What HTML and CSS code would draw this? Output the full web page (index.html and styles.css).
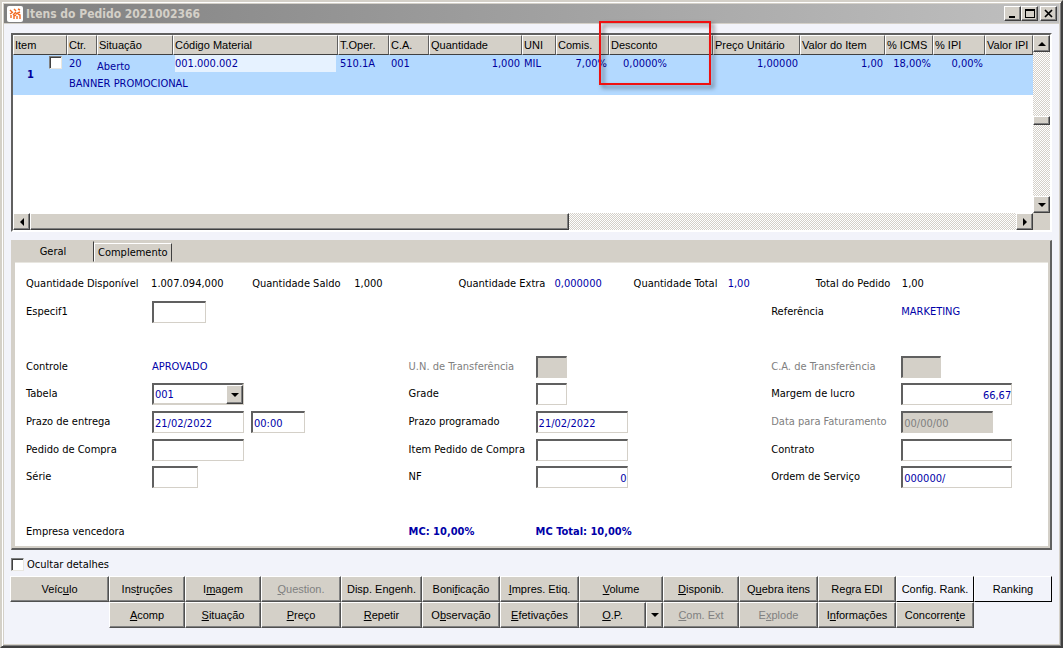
FILE: index.html
```html
<!DOCTYPE html>
<html lang="pt-BR">
<head>
  <meta charset="UTF-8">
  <meta name="viewport" content="width=device-width, initial-scale=1.0">
  <title>Itens do Pedido 2021002366</title>
  <link rel="stylesheet" href="styles.css">
</head>
<body>
  <div class="window">
    <header class="titlebar">
      <svg class="logo" viewBox="0 0 16 16">
        <rect width="16" height="16" rx="2" fill="#fff"/>
        <path d="M3 4l2 2M7 3l2 2M11 3l2 1M3 8l3-2M6 9l3-3M9 8l4-2M4 12V9M7 13v-3l2-1M10 13v-3M13 13V9l-2-1" stroke="#f26a21" stroke-width="1.4" fill="none"/>
      </svg>
      <h1>Itens do Pedido 2021002366</h1>
      <button class="win_btn" aria-label="Minimizar"><svg viewBox="0 0 12 11"><path d="M2 8h6v2H2z"/></svg></button>
      <button class="win_btn" aria-label="Maximizar"><svg viewBox="0 0 12 11"><path d="M1 1h10v9H1zM2 3v6h8V3z" fill-rule="evenodd"/></svg></button>
      <button class="win_btn close" aria-label="Fechar"><svg viewBox="0 0 12 11"><path d="M2 2l7 7M9 2l-7 7" stroke="#000" stroke-width="1.7"/></svg></button>
    </header>

    <main>
      <section class="list">
        <div class="list_view">
          <table>
            <colgroup>
              <col class="c_item"><col class="c_ctr"><col class="c_sit"><col class="c_cod"><col class="c_oper">
              <col class="c_ca"><col class="c_qtd"><col class="c_uni"><col class="c_com"><col class="c_desc">
              <col class="c_preco"><col class="c_valor"><col class="c_icms"><col class="c_ipi"><col>
            </colgroup>
            <thead>
              <tr>
                <th>Item</th><th>Ctr.</th><th>Situação</th><th>Código Material</th><th>T.Oper.</th>
                <th>C.A.</th><th>Quantidade</th><th>UNI</th><th>Comis.</th><th>Desconto</th>
                <th>Preço Unitário</th><th>Valor do Item</th><th>% ICMS</th><th>% IPI</th><th>Valor IPI</th>
              </tr>
            </thead>
            <tbody>
              <tr>
                <td rowspan="2" class="item">
                  <div class="item_box"><b>1</b><input type="checkbox" class="check" aria-label="Selecionar item 1"></div>
                </td>
                <td>20</td>
                <td class="low">Aberto</td>
                <td class="code"><span>001.000.002</span></td>
                <td>510.1A</td>
                <td>001</td>
                <td class="num">1,000</td>
                <td>MIL</td>
                <td class="num">7,00%</td>
                <td class="desc">0,0000%</td>
                <td class="num">1,00000</td>
                <td class="num">1,00</td>
                <td class="num">18,00%</td>
                <td class="num">0,00%</td>
                <td></td>
              </tr>
              <tr>
                <td colspan="14">BANNER PROMOCIONAL</td>
              </tr>
            </tbody>
          </table>
        </div>
        <div class="scroll scroll_v">
          <button aria-label="Acima"><svg viewBox="0 0 8 4"><path d="M0 4h8L4 0z"/></svg></button>
          <div class="track"><div class="thumb"></div></div>
          <button aria-label="Abaixo"><svg viewBox="0 0 8 4"><path d="M0 0h8L4 4z"/></svg></button>
        </div>
        <div class="scroll scroll_h">
          <button aria-label="Esquerda"><svg viewBox="0 0 4 8"><path d="M4 0v8L0 4z"/></svg></button>
          <div class="track"><div class="thumb"></div></div>
          <button aria-label="Direita"><svg viewBox="0 0 4 8"><path d="M0 0v8l4-4z"/></svg></button>
        </div>
      </section>

      <section class="details">
        <nav class="tabs">
          <button class="tab active">Geral</button>
          <button class="tab">Complemento</button>
        </nav>
        <div class="panel">
          <div class="totals">
            <span>Quantidade Disponível</span><span>1.007.094,000</span>
            <span>Quantidade Saldo</span><span>1,000</span>
            <span>Quantidade Extra</span><span class="value">0,000000</span>
            <span>Quantidade Total</span><span class="value">1,00</span>
            <span>Total do Pedido</span><span>1,00</span>
          </div>
          <form class="fields">
            <label for="especif">Especif1</label>
            <div><input id="especif" class="w54" type="text"></div>
            <span class="wide_gap"></span>
            <span>Referência</span>
            <span class="value">MARKETING</span>

            <span class="blank"></span>

            <span>Controle</span>
            <span class="value">APROVADO</span>
            <label for="un" class="off">U.N. de Transferência</label>
            <div><input id="un" class="w31" type="text" disabled></div>
            <label for="ca" class="off">C.A. de Transferência</label>
            <div><input id="ca" class="w40" type="text" disabled></div>

            <label for="tabela">Tabela</label>
            <div>
              <div class="combo">
                <select id="tabela"><option>001</option></select>
                <span class="drop"><svg viewBox="0 0 8 4"><path d="M0 0h8L4 4z"/></svg></span>
              </div>
            </div>
            <label for="grade">Grade</label>
            <div><input id="grade" class="w31" type="text"></div>
            <label for="margem">Margem de lucro</label>
            <div><input id="margem" class="w111 right" type="text" value="66,67"></div>

            <label for="entrega">Prazo de entrega</label>
            <div>
              <input id="entrega" class="w92" type="text" value="21/02/2022">
              <input class="w54" type="text" value="00:00" aria-label="Hora de entrega">
            </div>
            <label for="programado">Prazo programado</label>
            <div><input id="programado" class="w92" type="text" value="21/02/2022"></div>
            <label for="faturamento" class="off">Data para Faturamento</label>
            <div><input id="faturamento" class="w92" type="text" value="00/00/00" disabled></div>

            <label for="pedido">Pedido de Compra</label>
            <div><input id="pedido" class="w92" type="text"></div>
            <label for="item_pedido">Item Pedido de Compra</label>
            <div><input id="item_pedido" class="w92" type="text"></div>
            <label for="contrato">Contrato</label>
            <div><input id="contrato" class="w111" type="text"></div>

            <label for="serie">Série</label>
            <div><input id="serie" class="w46" type="text"></div>
            <label for="nf">NF</label>
            <div><input id="nf" class="w92 right" type="text" value="0"></div>
            <label for="ordem">Ordem de Serviço</label>
            <div><input id="ordem" class="w111" type="text" value="000000/"></div>

            <span class="blank"></span>

            <span>Empresa vencedora</span>
            <span></span>
            <b class="value">MC: 10,00%</b>
            <b class="value">MC Total: 10,00%</b>
          </form>
        </div>
      </section>

      <div class="hide_details">
        <input type="checkbox" class="check" id="ocultar">
        <label for="ocultar">Ocultar detalhes</label>
      </div>

      <div class="actions">
        <button>Veíc<u>u</u>lo</button>
        <button>Ins<u>t</u>ruções</button>
        <button>I<u>m</u>agem</button>
        <button disabled><u>Q</u>uestion.</button>
        <button>Disp. Engenh.</button>
        <button>Boni<u>f</u>icação</button>
        <button><u>I</u>mpres. Etiq.</button>
        <button><u>V</u>olume</button>
        <button><u>D</u>isponib.</button>
        <button>Q<u>u</u>ebra itens</button>
        <button>Re<u>g</u>ra EDI</button>
        <button class="light">Config. Rank.</button>
        <button class="light">Ranking</button>
        <button class="second"><u>A</u>comp</button>
        <button><u>S</u>ituação</button>
        <button><u>P</u>reço</button>
        <button><u>R</u>epetir</button>
        <button>O<u>b</u>servação</button>
        <button><u>E</u>fetivações</button>
        <div class="split">
          <button><u>O</u>.P.</button>
          <button aria-label="Mais opções"><svg viewBox="0 0 8 4"><path d="M0 0h8L4 4z"/></svg></button>
        </div>
        <button disabled><u>C</u>om. Ext</button>
        <button disabled>E<u>x</u>plode</button>
        <button>I<u>n</u>formações</button>
        <button>Concorren<u>t</u>e</button>
      </div>
    </main>
    <div class="highlight"></div>
  </div>
</body>
</html>
```
FILE: styles.css
```css
*{  box-sizing:border-box;  }
body{
  margin:0;  background:#d4d0c8;  color:#000;
  font:11px/16px "DejaVu Sans Condensed", "DejaVu Sans", sans-serif;
}
button,input,select{  margin:0;  padding:0;  font:inherit;  color:inherit;  border-radius:0;  }
svg{  display:block;  }

.window{
  position:relative;  min-height:100vh;  padding:2px;
  display:flex;  flex-direction:column;
  background:#d4d0c8;  border:2px solid;  border-color:#d4d0c8 #404040 #404040 #d4d0c8;
  box-shadow:inset 1px 1px #fff, inset -1px -1px #808080;
}

/* title bar */
.titlebar{
  height:19px;  padding:0 2px 0 3px;  display:flex;  align-items:center;
  background:linear-gradient(to right, #808080, #c0c0c0);
}
.logo{  width:16px;  height:16px;  }
.titlebar>h1{  flex:1;  margin:0 0 0 3px;  font-size:12px;  line-height:18px;  color:#d4d0c8;  }
.win_btn{  width:17px;  height:15px;  display:flex;  justify-content:center;  align-items:center;  }
.win_btn>svg{  width:12px;  height:11px;  }
.close{  margin-left:2px;  }
.win_btn,.scroll>button,.thumb,.drop{
  flex:none;  background:#d4d0c8;
  border:1px solid;  border-color:#fff #404040 #404040 #fff;
  box-shadow:inset -1px -1px #808080;
}

main{
  flex:1;  padding:9px 7px 16px;  display:flex;  flex-direction:column;
  background:#f2f3fa;  border-top:1px solid #d4d0c8;
}

/* item list */
.list{
  flex:1;  min-height:120px;  display:grid;
  grid-template-columns:minmax(0, 1fr) 17px;  grid-template-rows:1fr 17px;
  background:#d4d0c8;  border:2px solid;  border-color:#606060 #fff #fff #606060;
}
.list_view{  background:#fff;  overflow:hidden;  }
table{  width:100%;  table-layout:fixed;  border-collapse:separate;  border-spacing:0;  }
.c_item{  width:54px;  }
.c_ctr{  width:30px;  }
.c_sit{  width:76px;  }
.c_cod{  width:165px;  }
.c_oper{  width:51px;  }
.c_ca{  width:40px;  }
.c_qtd{  width:93px;  }
.c_uni{  width:34px;  }
.c_com{  width:53px;  }
.c_desc{  width:104px;  }
.c_preco{  width:87px;  }
.c_valor{  width:85px;  }
.c_icms{  width:48px;  }
.c_ipi{  width:52px;  }
th{
  height:20px;  padding:0 0 0 1px;  text-align:left;  white-space:nowrap;
  font:11px/16px "Liberation Sans", Arial, sans-serif;  background:#d4d0c8;
  border:1px solid;  border-color:#fff #606060 #404040 #fff;
}
td{
  height:20px;  padding:0 2px;  white-space:nowrap;  vertical-align:top;
  line-height:18px;  color:#00009c;  background:#b3d9ff;
}
.low{  padding:4px 0 0;  line-height:16px;  }
.num{  text-align:right;  }
.desc{  padding-left:14px;  }
.code>span{  display:block;  height:17px;  background:#e6f2ff;  }
.item_box{  padding-left:12px;  display:flex;  gap:15px;  line-height:40px;  }
.check{
  appearance:none;  width:13px;  height:13px;  margin:1px 0 0;  background:#fff;
  border:1px solid;  border-color:#808080 #e8e6e0 #e8e6e0 #808080;
  box-shadow:inset 1px 1px #404040;
}

/* scroll bars */
.scroll{  display:flex;  background:repeating-conic-gradient(#d4d0c8 0 25%, #fff 0 50%) 0 0 / 2px 2px;  }
.scroll_v{  flex-direction:column;  }
.scroll>button{  width:17px;  height:17px;  display:flex;  justify-content:center;  align-items:center;  }
.scroll_v svg,.drop svg,.split svg{  width:8px;  height:4px;  }
.scroll_h svg{  width:4px;  height:8px;  }
.track{  flex:1;  }
.scroll_v .thumb{  height:9px;  margin-top:64px;  }
.scroll_h .thumb{  width:calc(55% - 3px);  height:100%;  }

/* details */
.details{
  margin-top:8px;  background:#d4d0c8;
  border:1px solid;  border-color:#d4d0c8 #606060 #606060 #d4d0c8;
  border-width:1px 2px 2px 1px;
}
.tabs{  height:21px;  display:flex;  align-items:flex-end;  }
.tab{  height:19px;  padding:0 3px;  background:#d4d0c8;  border:1px solid;  border-color:#fff #404040 transparent #fff;  }
.tab.active{  width:82px;  height:21px;  border-color:transparent #404040 transparent transparent;  }
.panel{
  margin:0 2px 2px 3px;  padding:7px 0 0 11px;  background:#fff;
  border-top:1px solid #e8e6e0;
}
.totals{
  height:28px;  display:grid;  align-items:center;  white-space:nowrap;
  grid-template-columns:125fr 101fr 102fr 104fr 96fr 79fr 94fr 88fr 86fr 146fr;
}
.fields{
  height:248px;  display:grid;  align-items:center;  white-space:nowrap;
  grid-template-columns:126px 257fr 127px 236fr 130px 147fr;  grid-template-rows:repeat(9, 1fr);
}
.fields>div{  display:flex;  gap:7px;  }
.wide_gap{  grid-column:span 2;  }
.blank{  grid-column:1 / -1;  }
.value{  color:#0000a8;  }
.off{  color:#808080;  }
.fields input,.fields select{
  height:22px;  padding:2px 0 0 1px;  color:#0000a8;  background:#fff;
  border:2px solid;  border-color:#606060 #d4d0c8 #d4d0c8 #606060;
}
.fields input{  border-right-width:1px;  border-bottom-width:1px;  }
.fields input:disabled{  color:#808080;  background:#d4d0c8;  }
.fields .right{  text-align:right;  }
.w31{  width:31px;  }
.w40{  width:40px;  }
.w46{  width:46px;  }
.w54{  width:54px;  }
.w92{  width:92px;  }
.w111{  width:111px;  }
.combo{  position:relative;  width:92px;  }
.combo>select{  display:block;  width:100%;  appearance:none;  }
.drop{
  position:absolute;  top:2px;  right:1px;  bottom:1px;  width:17px;
  display:flex;  justify-content:center;  align-items:center;  pointer-events:none;
}

.hide_details{  height:16px;  margin:7px 0 3px;  display:flex;  gap:3px;  }

/* buttons */
.actions{
  margin-left:-1px;  display:grid;  grid-auto-rows:26px;
  grid-template-columns:99fr 76fr 76fr 80fr 81fr 78fr 79fr 84fr 76fr 79fr 78fr 78fr 78fr;
}
.actions button{
  min-width:0;  white-space:nowrap;  font:11px/16px "Liberation Sans", Arial, sans-serif;
  background:#d4d0c8;  border:1px solid;  border-color:#fff #505050 #505050 #fff;
  box-shadow:inset -1px -1px #808080;
}
.actions button:disabled{  color:#808080;  }
.actions .light{  background:#f2f3fa;  border-color:#fff #000 #000 #fff;  box-shadow:none;  }
.actions .second{  grid-column:2;  }
.split{  display:flex;  }
.split>button:first-child{  flex:1;  }
.split>button:last-child{  width:17px;  display:flex;  justify-content:center;  align-items:center;  }

/* red mark over the Desconto column */
.highlight{
  position:absolute;  left:597px;  top:19px;  width:112px;  height:64px;
  border:2px solid #f01010;  pointer-events:none;
  filter:drop-shadow(3px 3px 2px rgba(0,0,0,0.5));
}
```
